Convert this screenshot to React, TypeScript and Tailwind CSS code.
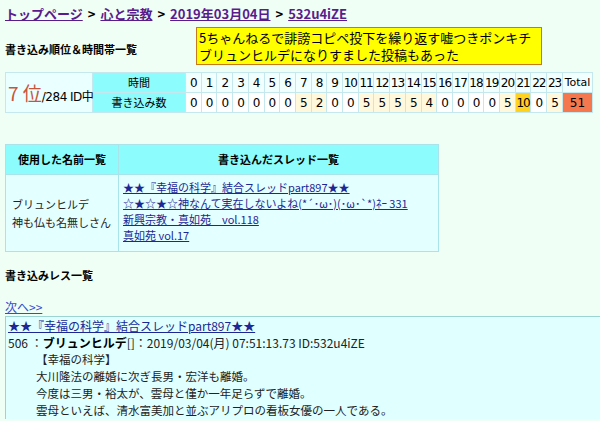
const hours = [0, 0, 0, 0, 0, 0, 0, 5, 2, 0, 0, 5, 5, 5, 5, 4, 0, 0, 0, 0, 5, 10, 0, 5]

const cellColor = (n: number) => {
  if (n >= 10) return "bg-[#ffd21f]"
  if (n > 0) return "bg-[#fff8dc]"
  return "bg-white"
}

const threads = [
  "★★『幸福の科学』結合スレッドpart897★★",
  "☆★☆★☆神なんて実在しないよね(*´･ω･)(･ω･`*)ﾈｰ 331",
  "新興宗教・真如苑　vol.118",
  "真如苑 vol.17",
]

const body = [
  "大川隆法の離婚に次ぎ長男・宏洋も離婚。",
  "今度は三男・裕太が、雲母と僅か一年足らずで離婚。",
  "雲母といえば、清水富美加と並ぶアリプロの看板女優の一人である。",
]

export default function App() {
  return (
    <div
      className="min-h-screen bg-[#f0fff5] text-black overflow-hidden"
      style={{ fontFamily: '"Noto Sans CJK JP", sans-serif' }}
    >
      {/* breadcrumb */}
      <div className="px-[5px] pt-[4px] h-[22px] flex items-center gap-[5px] text-[13px] font-bold leading-none">
        <a className="text-[#5a1c8c] underline">トップページ</a>
        <span>&gt;</span>
        <a className="text-[#5a1c8c] underline">心と宗教</a>
        <span>&gt;</span>
        <a className="text-[#5a1c8c] underline">2019年03月04日</a>
        <span>&gt;</span>
        <a className="text-[#5a1c8c] underline">532u4iZE</a>
      </div>

      <div className="flex items-center mt-[5px] px-[5px]">
        <div className="w-[191px] text-[11px] font-bold pt-[6px]">書き込み順位＆時間帯一覧</div>
        <div className="bg-[#ffff00] border border-[#c87a1a] text-[13px] leading-[17px] px-[2px] py-[1px] w-[346px]">
          5ちゃんねるで誹謗コピペ投下を繰り返す嘘つきポンキチ
          <br />
          ブリュンヒルデになりすました投稿もあった
        </div>
      </div>

      {/* time table */}
      <table
        className="mt-[7px] ml-[5px] w-[588px] border-collapse table-fixed text-[12px] leading-none"
        style={{ fontFamily: '"DejaVu Sans", "Noto Sans CJK JP", sans-serif' }}
      >
        <colgroup>
          <col className="w-[87px]" />
          <col className="w-[93px]" />
          {hours.map((_, i) => (
            <col key={i} />
          ))}
          <col className="w-[30px]" />
        </colgroup>
        <tbody>
          <tr className="h-[20px]">
            <td rowSpan={2} className="bg-[#eaffff] border border-[#c4e8ee] px-[2px] whitespace-nowrap">
              <span className="text-[19px] text-[#c8553a]" style={{ fontFamily: '"Noto Sans CJK JP", sans-serif' }}>
                7 位
              </span>
              <span className="text-[12px] tracking-[-0.5px]">/284 ID中</span>
            </td>
            <td className="bg-[#8cfcfc] border border-[#c4e8ee] text-center text-[11px]" style={{ fontFamily: '"Noto Sans CJK JP", sans-serif' }}>
              時間
            </td>
            {hours.map((_, i) => (
              <td key={i} className="bg-[#f2ffff] border border-[#c4e8ee] text-center tracking-[-1px]">
                {i}
              </td>
            ))}
            <td className="bg-[#f2ffff] border border-[#c4e8ee] text-center text-[11px]">Total</td>
          </tr>
          <tr className="h-[20px]">
            <td className="bg-[#8cfcfc] border border-[#c4e8ee] text-center text-[11px]" style={{ fontFamily: '"Noto Sans CJK JP", sans-serif' }}>
              書き込み数
            </td>
            {hours.map((n, i) => (
              <td key={i} className={`${cellColor(n)} border border-[#c4e8ee] text-center tracking-[-1px]`}>
                {n}
              </td>
            ))}
            <td className="bg-[#f5774d] border border-[#c4e8ee] text-center">51</td>
          </tr>
        </tbody>
      </table>

      {/* names / threads */}
      <table className="mt-[31px] ml-[5px] w-[434px] border-collapse table-fixed text-[11px]">
        <colgroup>
          <col className="w-[113px]" />
          <col />
        </colgroup>
        <thead>
          <tr className="h-[30px]">
            <th className="bg-[#8cfcfc] border border-[#a8e4ea] font-bold">使用した名前一覧</th>
            <th className="bg-[#8cfcfc] border border-[#a8e4ea] font-bold">書き込んだスレッド一覧</th>
          </tr>
        </thead>
        <tbody>
          <tr>
            <td className="bg-[#e4ffff] border border-[#a8e4ea] px-[6px] leading-[18px] text-[#222]">
              ブリュンヒルデ
              <br />
              神も仏も名無しさん
            </td>
            <td className="bg-[#e4ffff] border border-[#a8e4ea] px-[4px] pt-[4px] pb-[8px] leading-[16px]">
              {threads.map((t) => (
                <div key={t}>
                  <a className="text-[#1c2894] underline">{t}</a>
                </div>
              ))}
            </td>
          </tr>
        </tbody>
      </table>

      <div className="px-[5px] mt-[15px] text-[11px] font-bold">書き込みレス一覧</div>

      <div className="px-[5px] mt-[14px] text-[12px]">
        <a className="text-[#3a4ad0] underline">次へ&gt;&gt;</a>
      </div>

      <div className="ml-[5px] bg-[#e0ffff] border-t border-l border-[#9cd4d4] text-[12px] leading-[17px] pl-[2px]">
        <a className="text-[#1c2894] underline">★★『幸福の科学』結合スレッドpart897★★</a>
        <div className="text-[#222]">
          506 ：<b className="text-black">ブリュンヒルデ</b>[]：2019/03/04(月) 07:51:13.73 ID:532u4iZE
        </div>
        <div className="pl-[28px] text-[#222] text-[11.5px] leading-[17px]">
          <div>【幸福の科学】</div>
          {body.map((l) => (
            <div key={l}>{l}</div>
          ))}
        </div>
      </div>
    </div>
  )
}
